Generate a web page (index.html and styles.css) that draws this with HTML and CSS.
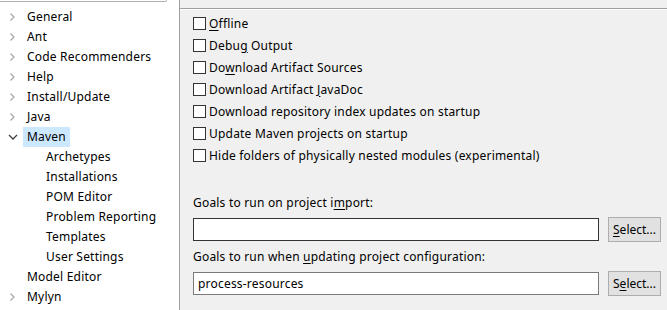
FILE: index.html
```html
<!DOCTYPE html>
<html>
<head>
<meta charset="utf-8">
<link rel="stylesheet" href="styles.css">
</head>
<body>
<div class="window">
  <aside class="nav">
    <div class="search"></div>
    <ul class="tree">
      <li class="row"><span class="chev"><svg width="8" height="8" viewBox="0 0 8 8"><polyline points="2.5,0.5 6,4 2.5,7.5" fill="none" stroke="#a6a6a6" stroke-width="1.2"/></svg></span><span class="label">General</span></li>
      <li class="row"><span class="chev"><svg width="8" height="8" viewBox="0 0 8 8"><polyline points="2.5,0.5 6,4 2.5,7.5" fill="none" stroke="#a6a6a6" stroke-width="1.2"/></svg></span><span class="label">Ant</span></li>
      <li class="row"><span class="chev"><svg width="8" height="8" viewBox="0 0 8 8"><polyline points="2.5,0.5 6,4 2.5,7.5" fill="none" stroke="#a6a6a6" stroke-width="1.2"/></svg></span><span class="label">Code Recommenders</span></li>
      <li class="row"><span class="chev"><svg width="8" height="8" viewBox="0 0 8 8"><polyline points="2.5,0.5 6,4 2.5,7.5" fill="none" stroke="#a6a6a6" stroke-width="1.2"/></svg></span><span class="label">Help</span></li>
      <li class="row"><span class="chev"><svg width="8" height="8" viewBox="0 0 8 8"><polyline points="2.5,0.5 6,4 2.5,7.5" fill="none" stroke="#a6a6a6" stroke-width="1.2"/></svg></span><span class="label">Install/Update</span></li>
      <li class="row"><span class="chev"><svg width="8" height="8" viewBox="0 0 8 8"><polyline points="2.5,0.5 6,4 2.5,7.5" fill="none" stroke="#a6a6a6" stroke-width="1.2"/></svg></span><span class="label">Java</span></li>
      <li class="row"><span class="chev"><svg width="10" height="8" viewBox="0 0 10 8"><polyline points="1,2 5,6 9,2" fill="none" stroke="#404040" stroke-width="1.3"/></svg></span><span class="label selected">Maven</span></li>
      <li class="row child"><span class="label">Archetypes</span></li>
      <li class="row child"><span class="label">Installations</span></li>
      <li class="row child"><span class="label">POM Editor</span></li>
      <li class="row child"><span class="label">Problem Reporting</span></li>
      <li class="row child"><span class="label">Templates</span></li>
      <li class="row child"><span class="label">User Settings</span></li>
      <li class="row"><span class="chev"></span><span class="label">Model Editor</span></li>
      <li class="row"><span class="chev"><svg width="8" height="8" viewBox="0 0 8 8"><polyline points="2.5,0.5 6,4 2.5,7.5" fill="none" stroke="#a6a6a6" stroke-width="1.2"/></svg></span><span class="label">Mylyn</span></li>
    </ul>
  </aside>
  <main class="page">
    <div class="sep"></div>
    <div class="checks">
      <label class="check"><span class="box"></span><span><u>O</u>ffline</span></label>
      <label class="check"><span class="box"></span><span>Debu<u>g</u> Output</span></label>
      <label class="check"><span class="box"></span><span>Do<u>w</u>nload Artifact Sources</span></label>
      <label class="check"><span class="box"></span><span>Download Artifact <u>J</u>avaDoc</span></label>
      <label class="check"><span class="box"></span><span>Download repository index updates on startup</span></label>
      <label class="check"><span class="box"></span><span>Update Maven projects on startup</span></label>
      <label class="check"><span class="box"></span><span>Hide folders of physically nested modules (experimental)</span></label>
    </div>
    <div class="field first">
      <div class="flabel">Goals to run on project i<u>m</u>port:</div>
      <div class="frow">
        <div class="input focus"></div>
        <div class="btn"><u>S</u>elect...</div>
      </div>
    </div>
    <div class="field">
      <div class="flabel">Goals to run when <u>u</u>pdating project configuration:</div>
      <div class="frow">
        <div class="input">process-resources</div>
        <div class="btn">S<u>e</u>lect...</div>
      </div>
    </div>
  </main>
</div>
</body>
</html>
```
FILE: styles.css
```css
html, body {
  margin: 0;
  padding: 0;
}
body {
  width: 667px;
  height: 310px;
  overflow: hidden;
  background: #f0f0f0;
  font-family: "Noto Sans", "Open Sans", sans-serif;
  font-size: 12px;
  letter-spacing: 0.2px;
  color: #000;
}
u {
  text-decoration: underline;
  text-underline-offset: 2px;
}
.window {
  display: flex;
  height: 310px;
}
.nav {
  flex: none;
  background: #fff;
  border-right: 1px solid #a0a0a0;
  box-sizing: border-box;
  width: 180px;
  overflow: hidden;
}
.search {
  width: 167px;
  height: 20px;
  margin-top: -18px;
  border: 1px solid #abadb3;
  border-left: none;
  border-radius: 0 0 2px 0;
  box-sizing: border-box;
}
.tree {
  list-style: none;
  margin: 5px 0 0 0;
  padding: 0;
}
.row {
  height: 20px;
  display: flex;
  align-items: center;
  white-space: nowrap;
}
.chev {
  width: 23px;
  padding-left: 8px;
  box-sizing: border-box;
  display: flex;
  align-items: center;
}
.row.child {
  padding-left: 42px;
}
.label {
  padding: 0 4px;
  height: 20px;
  line-height: 20px;
}
.label.selected {
  background: #cce8ff;
}
.page {
  flex: 1;
  display: flex;
  flex-direction: column;
}
.sep {
  margin-top: 8px;
  height: 1px;
  background: #a0a0a0;
  border-bottom: 1px solid #fff;
}
.checks {
  display: flex;
  flex-direction: column;
  padding: 2px 0 0 13px;
}
.check {
  height: 22px;
  display: flex;
  align-items: center;
  white-space: nowrap;
}
.box {
  width: 13px;
  height: 13px;
  box-sizing: border-box;
  border: 1px solid #333;
  background: #fff;
  margin-right: 3px;
  flex: none;
}
.field {
  padding: 0 6px 0 13px;
}
.field.first {
  margin-top: 27px;
}
.flabel {
  height: 20px;
  line-height: 20px;
  white-space: nowrap;
}
.frow {
  display: flex;
  align-items: center;
  margin-top: 4px;
  margin-bottom: 5px;
  height: 25px;
}
.input {
  width: 406px;
  height: 23px;
  box-sizing: border-box;
  border: 1px solid #7a7a7a;
  background: #fff;
  padding: 0 4px;
  line-height: 21px;
}
.input.focus {
  border-color: #333;
}
.btn {
  margin-left: 9px;
  width: 53px;
  height: 25px;
  box-sizing: border-box;
  border: 1px solid #adadad;
  background: #e1e1e1;
  text-align: center;
  line-height: 23px;
  letter-spacing: 0;
}
```
